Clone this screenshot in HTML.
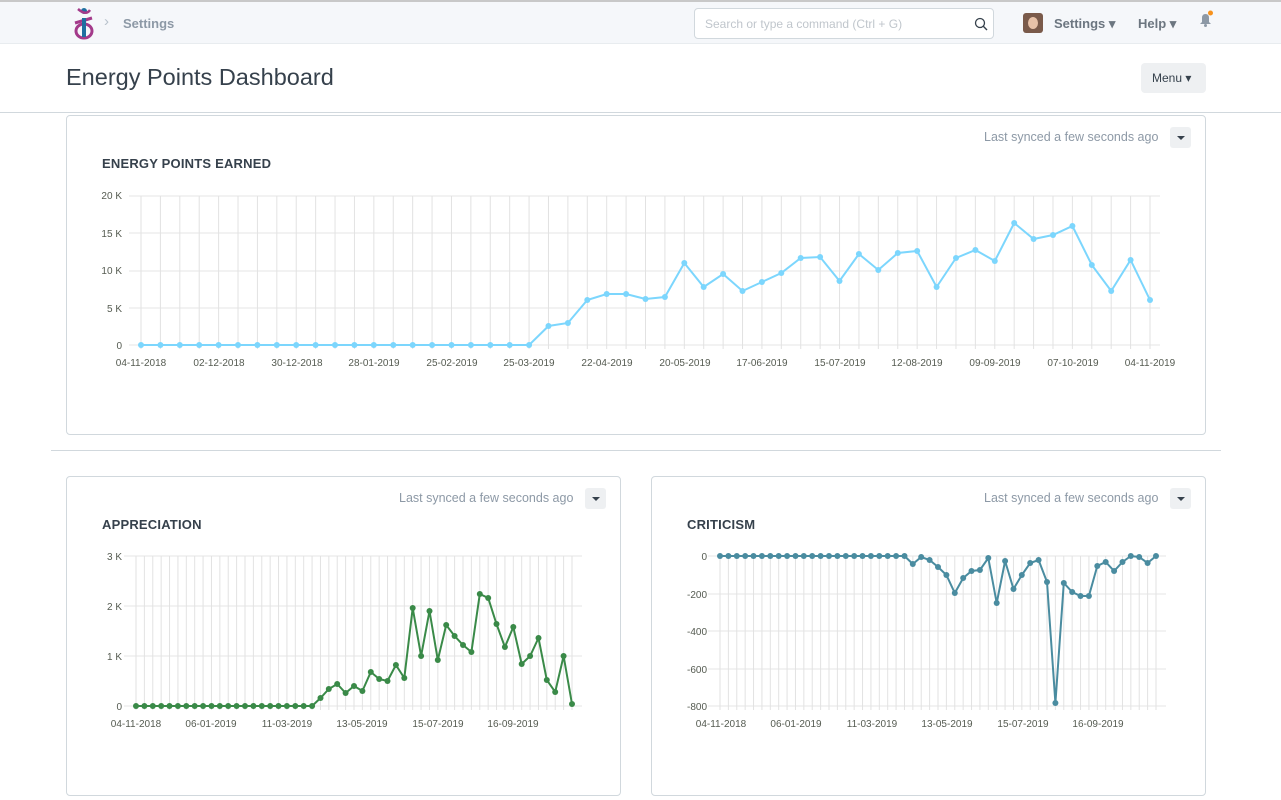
<!DOCTYPE html>
<html><head><meta charset="utf-8"><style>
*{box-sizing:border-box;margin:0;padding:0}
body{width:1281px;height:800px;overflow:hidden;background:#fff;font-family:"Liberation Sans",sans-serif;color:#36414c;position:relative}
.nav{position:absolute;left:0;top:0;width:1281px;height:44px;background:#f5f7fa;border-top:2px solid #c8c8c8;border-bottom:1px solid #e8ecef}
.abs{position:absolute}
.card{position:absolute;border:1px solid #d1d8dd;border-radius:4px;background:#fff}
.sync{position:absolute;font-size:12.5px;color:#8d99a6}
.dd{position:absolute;width:21px;height:21px;background:#eef0f2;border-radius:3px}
.dd:after{content:"";position:absolute;left:7px;top:9px;border-left:4px solid transparent;border-right:4px solid transparent;border-top:4px solid #36414c}
.ttl{position:absolute;font-size:13px;font-weight:bold;color:#36414c;letter-spacing:.2px}
svg text{font-family:"Liberation Sans",sans-serif;font-size:10px;fill:#555b51}
</style></head><body>
<div class="nav">
 <svg class="abs" style="left:72px;top:4px" width="24" height="34" viewBox="0 0 24 34"><circle cx="12" cy="5" r="3" fill="#1f6fa0"/><path d="M6 3 Q14 10 18 4" stroke="#a33a8a" stroke-width="2.5" fill="none"/><ellipse cx="12" cy="25" rx="8" ry="7" stroke="#a33a8a" stroke-width="3" fill="none"/><path d="M3 17 L20 12" stroke="#a33a8a" stroke-width="3"/><rect x="10" y="12" width="4" height="19" fill="#1f6fa0"/></svg>
 <div class="abs" style="left:104px;top:11px;color:#b8c2cc;font-size:15px">&#x203A;</div>
 <div class="abs" style="left:123px;top:14px;font-size:13px;font-weight:bold;color:#8d99a6">Settings</div>
 <div class="abs" style="left:694px;top:6px;width:300px;height:31px;background:#fff;border:1px solid #d1d8dd;border-radius:4px"><span class="abs" style="left:10px;top:8px;font-size:12px;color:#c0c6cc">Search or type a command (Ctrl + G)</span>
 <svg class="abs" style="left:279px;top:8px" width="14" height="14"><circle cx="6" cy="6" r="4.5" stroke="#36414c" stroke-width="1.3" fill="none"/><path d="M9.3 9.3L13 13" stroke="#36414c" stroke-width="1.4"/></svg></div>
 <div class="abs" style="left:1023px;top:11px;width:20px;height:20px;border-radius:3px;background:#7a5a4a;overflow:hidden"><div class="abs" style="left:5px;top:4px;width:10px;height:12px;border-radius:50%;background:#e8c2a8"></div></div>
 <div class="abs" style="left:1054px;top:14px;font-size:13px;font-weight:bold;color:#6c7680">Settings &#x25BE;</div>
 <div class="abs" style="left:1138px;top:14px;font-size:13px;font-weight:bold;color:#6c7680">Help &#x25BE;</div>
 <svg class="abs" style="left:1198px;top:8px" width="16" height="18"><path d="M2 14 L4 12 V8 Q4 4 7.5 4 Q11 4 11 8 V12 L13 14 Z" fill="#8d99a6"/><circle cx="7.5" cy="15.5" r="1.5" fill="#8d99a6"/><circle cx="12.5" cy="3" r="2.5" fill="#f7921c"/></svg>
</div>
<div class="abs" style="left:66px;top:64px;font-size:23.5px;color:#36414c">Energy Points Dashboard</div>
<div class="abs" style="left:1141px;top:63px;width:65px;height:30px;background:#eef0f2;border-radius:4px;font-size:12px;padding:8px 0 0 11px;color:#36414c">Menu &#x25BE;</div>
<div class="abs" style="left:0;top:112px;width:1281px;height:1px;background:#d1d8dd"></div>
<div class="abs" style="left:51px;top:450px;width:1170px;height:1px;background:#d1d8dd"></div>

<div class="card" style="left:66px;top:115px;width:1140px;height:320px"></div>
<div class="sync" style="left:984px;top:130px">Last synced a few seconds ago</div><div class="dd" style="left:1170px;top:127px"></div>
<div class="ttl" style="left:102px;top:156px">ENERGY POINTS EARNED</div>

<div class="card" style="left:66px;top:476px;width:555px;height:320px"></div>
<div class="sync" style="left:399px;top:491px">Last synced a few seconds ago</div><div class="dd" style="left:585px;top:488px"></div>
<div class="ttl" style="left:102px;top:517px">APPRECIATION</div>

<div class="card" style="left:651px;top:476px;width:555px;height:320px"></div>
<div class="sync" style="left:984px;top:491px">Last synced a few seconds ago</div><div class="dd" style="left:1170px;top:488px"></div>
<div class="ttl" style="left:687px;top:517px">CRITICISM</div>

<svg id="s" class="abs" style="left:0;top:0" width="1281" height="800">
<g id="g"></g>
<g text-anchor="end">
<text x="122" y="199">20 K</text><text x="122" y="237">15 K</text><text x="122" y="274">10 K</text><text x="122" y="312">5 K</text><text x="122" y="349">0</text>
<text x="122" y="560">3 K</text><text x="122" y="610">2 K</text><text x="122" y="660">1 K</text><text x="122" y="710">0</text>
<text x="707" y="560">0</text><text x="707" y="598">-200</text><text x="707" y="635">-400</text><text x="707" y="673">-600</text><text x="707" y="710">-800</text>
</g>
<g text-anchor="middle">
<text x="141" y="366">04-11-2018</text><text x="219" y="366">02-12-2018</text><text x="297" y="366">30-12-2018</text><text x="374" y="366">28-01-2019</text><text x="452" y="366">25-02-2019</text><text x="529" y="366">25-03-2019</text><text x="607" y="366">22-04-2019</text><text x="685" y="366">20-05-2019</text><text x="762" y="366">17-06-2019</text><text x="840" y="366">15-07-2019</text><text x="917" y="366">12-08-2019</text><text x="995" y="366">09-09-2019</text><text x="1073" y="366">07-10-2019</text><text x="1150" y="366">04-11-2019</text>
<text x="136" y="727">04-11-2018</text><text x="211" y="727">06-01-2019</text><text x="287" y="727">11-03-2019</text><text x="362" y="727">13-05-2019</text><text x="438" y="727">15-07-2019</text><text x="513" y="727">16-09-2019</text>
<text x="721" y="727">04-11-2018</text><text x="796" y="727">06-01-2019</text><text x="872" y="727">11-03-2019</text><text x="947" y="727">13-05-2019</text><text x="1023" y="727">15-07-2019</text><text x="1098" y="727">16-09-2019</text>
</g>
</svg>
<script>
var g=document.getElementById('g'),h='';
function chart(x0,x1,yt,yb,hy,vals,col){var n=53,st=(x1-x0)/52;
 hy.forEach(function(y){h+='<line x1="'+(x0-12)+'" x2="'+(x1+10)+'" y1="'+y+'" y2="'+y+'" stroke="#e6e6e6"/>';});
 for(var i=0;i<n;i++){var x=x0+i*st;h+='<line x1="'+x+'" x2="'+x+'" y1="'+yt+'" y2="'+(yb+4)+'" stroke="#e2e2e2"/>';}
 var p=[];for(var i=0;i<n;i++){p.push((x0+i*st).toFixed(1)+','+vals[i]);}
 h+='<polyline points="'+p.join(' ')+'" fill="none" stroke="'+col+'" stroke-width="2"/>';
 p.forEach(function(q){var a=q.split(',');h+='<circle cx="'+a[0]+'" cy="'+a[1]+'" r="3" fill="'+col+'"/>';});}
var a=[];for(var i=0;i<21;i++)a.push(345);
a=a.concat([326,323,300,294,294,299,297,263,287,274,291,282,273,258,257,281,254,270,253,251,287,258,250,261,223,239,235,226,265,291,260,300]);
chart(141,1150,196,345,[196,233,271,308,345],a,'#7cd6fd');
var b=[];for(var i=0;i<22;i++)b.push(706);
b=b.concat([698,689,684,693,686,691,672,679,681,665,678,608,656,611,660,625,636,645,652,594,598,624,647,627,664,656,638,680,692,656,704]);
chart(136,572,556,706,[556,606,656,706],b,'#3a8a48');
var c=[];for(var i=0;i<23;i++)c.push(556);
c=c.concat([564,557,560,567,575,593,578,571,570,558,603,561,589,575,563,560,582,703,583,592,596,596,566,562,571,562,556,557,563,556]);
chart(720,1156,556,706,[556,594,631,669,706],c,'#4a8ca0');
g.innerHTML=h;
</script>
</body></html>
